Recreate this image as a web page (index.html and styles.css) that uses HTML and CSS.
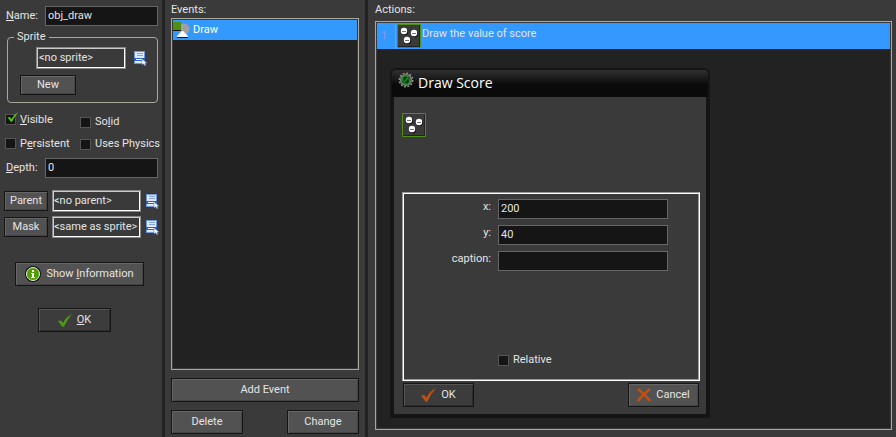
FILE: index.html
```
<!DOCTYPE html>
<html lang="en">
<head>
  <meta charset="UTF-8">
  <meta name="viewport" content="width=device-width, initial-scale=1.0">
  <title>Object Properties</title>
  <link rel="stylesheet" href="styles.css">
</head>
<body>
  <!-- shared icons -->
  <svg class="defs" aria-hidden="true">
    <symbol id="icon-menu" viewBox="0 0 13 15">
      <path fill="#6f95dc" d="M0 0h11v13H0z"/>
      <path fill="#dfe9fb" d="M1 1h9v11H1z"/>
      <path fill="#86a5df" d="M3 2h6v1H3zM3 4h6v1H3z"/>
      <path fill="#2b63c4" d="M0 7h11v3H0z"/>
      <path fill="#fff" d="M2 8h7v1H2z"/>
      <path fill="#fff" stroke="#4468b0" stroke-width=".5" d="M8 8l5 4-2 .3 1 2-1.200.5-1-2L8 14z"/>
    </symbol>
    <symbol id="icon-check" viewBox="0 0 14 13">
      <path d="M0 7l3-.5 2 2.500Q8 3 14 0 9 6 6 12.500L4.500 13z"/>
    </symbol>
    <symbol id="icon-score" viewBox="0 0 24 24">
      <path fill="#3a3a3a" stroke="#4e8f16" d="M.5.5h23v23H.5z"/>
      <path fill="none" stroke="#222" d="M22.500 1v21.500H1"/>
      <g fill="#181818"><circle cx="8" cy="8" r="3.200"/><circle cx="18" cy="10" r="3.200"/><circle cx="11" cy="17" r="3.200"/></g>
      <g fill="#fff"><circle cx="7" cy="7" r="3.200"/><circle cx="17" cy="9" r="3.200"/><circle cx="10" cy="16" r="3.200"/></g>
      <path fill="#777" d="M5 7h4v1H5zM15 9h4v1h-4zM8 16h4v1H8z"/>
    </symbol>
  </svg>

  <main class="editor">
    <form class="properties">
      <div class="name-row">
        <label for="name"><u>N</u>ame:</label>
        <input class="field" id="name" type="text" value="obj_draw">
      </div>
      <fieldset class="sprite">
        <legend>Sprite</legend>
        <div class="sprite-row">
          <output class="resource">&lt;no sprite&gt;</output>
          <button class="pick" type="button" aria-label="Choose sprite"><svg width="13" height="15"><use href="#icon-menu"/></svg></button>
        </div>
        <button class="btn small new" type="button">New</button>
      </fieldset>
      <div class="flags">
        <div class="flag-column">
          <label class="flag"><input class="check" type="checkbox" checked><span><u>V</u>isible</span><svg class="tick" width="12" height="10"><use href="#icon-check"/></svg></label>
          <label class="flag"><input class="check" type="checkbox"><span>P<u>e</u>rsistent</span></label>
        </div>
        <div class="flag-column second">
          <label class="flag"><input class="check" type="checkbox"><span>So<u>l</u>id</span></label>
          <label class="flag"><input class="check" type="checkbox"><span>Uses Physics</span></label>
        </div>
      </div>
      <div class="depth-row">
        <label for="depth"><u>D</u>epth:</label>
        <input class="field" id="depth" type="text" value="0">
      </div>
      <div class="links">
        <button class="btn small" type="button">Parent</button>
        <output class="resource">&lt;no parent&gt;</output>
        <button class="pick" type="button" aria-label="Choose parent"><svg width="13" height="15"><use href="#icon-menu"/></svg></button>
        <button class="btn small" type="button">Mask</button>
        <output class="resource">&lt;same as sprite&gt;</output>
        <button class="pick" type="button" aria-label="Choose mask"><svg width="13" height="15"><use href="#icon-menu"/></svg></button>
      </div>
      <button class="btn info" type="button">
        <svg width="16" height="16" viewBox="0 0 16 16">
          <circle cx="8" cy="8" r="8" fill="#111"/>
          <circle cx="8" cy="8" r="6.500" fill="#519b05" stroke="#e9f2e0" stroke-width="1"/>
          <path fill="#fff" d="M7 4h2v2H7zM6 7h3v4h1v1H6v-1h1V8H6z"/>
        </svg>
        <span>Show <u>I</u>nformation</span>
      </button>
      <button class="btn dark confirm" type="button">
        <svg class="green" width="14" height="13"><use href="#icon-check"/></svg>
        <span><u>O</u>K</span>
      </button>
    </form>

    <section class="events">
      <h2>Events:</h2>
      <ul class="list">
        <li class="event">
          <svg width="17" height="16" viewBox="0 0 17 16">
            <circle cx="11" cy="7" r="5.500" fill="#a0a0a0"/>
            <path fill="#111" d="M0 8h8v1H0zM4 15h11v1H4z"/>
            <path fill="#4e8f16" d="M0 0h8v8H0z"/>
            <path fill="#fff" d="M9 9h1l5 5v1H4v-1z"/>
          </svg>
          <span>Draw</span>
        </li>
      </ul>
      <button class="btn" type="button">Add Event</button>
      <div class="event-buttons">
        <button class="btn" type="button">Delete</button>
        <button class="btn" type="button">Change</button>
      </div>
    </section>

    <section class="actions">
      <h2>Actions:</h2>
      <ol class="list">
        <li class="action">
          <span class="line">1</span>
          <svg width="24" height="24"><use href="#icon-score"/></svg>
          <span class="action-text">Draw the value of score</span>
        </li>
      </ol>

      <div class="dialog" role="dialog" aria-labelledby="dialog-title">
        <header class="titlebar">
          <svg width="16" height="16" viewBox="0 0 16 16">
            <circle cx="8" cy="8" r="6.700" fill="none" stroke="#8a8a8a" stroke-width="1.600" stroke-dasharray="2 1.500"/>
            <circle cx="8" cy="8" r="5.300" fill="#0e3a12" stroke="#858585" stroke-width="1.500"/>
            <path fill="none" stroke="#1f8c2b" stroke-width="1.500" d="M5 9a3 3 0 0 1 5-4M11 7a3 3 0 0 1-5 4M5.500 10.500l5-5"/>
          </svg>
          <h1 id="dialog-title">Draw Score</h1>
        </header>
        <form class="dialog-body">
          <svg class="action-icon" width="24" height="24"><use href="#icon-score"/></svg>
          <div class="params">
            <label for="x">x:</label>
            <input class="field" id="x" type="text" value="200">
            <label for="y">y:</label>
            <input class="field" id="y" type="text" value="40">
            <label for="caption">caption:</label>
            <input class="field" id="caption" type="text">
            <label class="flag relative"><input class="check" type="checkbox"><span>Relative</span></label>
          </div>
          <div class="dialog-buttons">
            <button class="btn dark" type="button">
              <svg class="orange" width="15" height="14"><use href="#icon-check"/></svg>
              <span>OK</span>
            </button>
            <button class="btn" type="button">
              <svg width="14" height="14" viewBox="0 0 14 14"><path fill="none" stroke="#c05010" stroke-width="2.500" d="M1 1q7 5 12 12M13 1Q6 6 1 13"/></svg>
              <span>Cancel</span>
            </button>
          </div>
        </form>
      </div>
    </section>
  </main>
</body>
</html>
```
FILE: styles.css
```
* {
  box-sizing: border-box;
}
body {
  margin: 0;
  background: #3a3a3a;
  color: #e4e4e4;
  font-family: Roboto, "Liberation Sans", sans-serif;
  font-size: 11px;
  line-height: 16px;
}
button,
input {
  font: inherit;
  color: inherit;
}
svg {
  flex: none;
}
h1,
h2 {
  margin: 0;
  font-weight: normal;
}
h2 {
  font-size: 11px;
}
.defs {
  position: absolute;
  width: 0;
  height: 0;
}
.editor {
  display: grid;
  grid-template-columns: 165px 203px 1fr;
  min-height: 100vh;
}

/* controls */
.field {
  width: 100%;
  min-width: 0;
  height: 20px;
  padding: 0 2px 2px;
  border: 1px solid #666;
  background: #151515;
}
.btn {
  display: flex;
  align-items: center;
  justify-content: center;
  gap: 5px;
  height: 24px;
  padding: 0;
  border: 1px solid #151515;
  background: #525252;
  box-shadow: inset 1px 1px #666, inset -1px -1px #444;
}
.btn.small {
  height: 20px;
}
.btn.dark {
  background: #3c3c3c;
  box-shadow: inset 1px 1px #555, inset -1px -1px #2c2c2c;
}
.resource {
  height: 22px;
  padding: 2px;
  border: 1px solid #888;
  box-shadow: inset 1px 1px #ccc, inset -1px -1px #fff;
  white-space: nowrap;
}
.pick {
  display: flex;
  padding: 0;
  border: 0;
  background: none;
}
.check {
  appearance: none;
  width: 11px;
  height: 11px;
  margin: 0;
  border: 1px solid #555;
  background: #151515;
}
.flag {
  position: relative;
  display: flex;
  align-items: center;
  gap: 4px;
}
.tick {
  position: absolute;
  left: 2px;
  top: 1px;
  fill: #4fc01a;
}
.green {
  fill: #4e9a14;
}
.orange {
  fill: #c05010;
}
.list {
  margin: 0;
  padding: 0;
  list-style: none;
  border: 1px solid #aca899;
  outline: 1px solid #3a3a3a;
  outline-offset: -2px;
  background: #222;
}
.list li {
  margin: 1px;
}

/* object properties */
.properties {
  display: flex;
  flex-direction: column;
  padding: 6px 4px 0;
  border-right: 3px solid #222;
}
.name-row,
.depth-row {
  display: grid;
  grid-template-columns: 39px 1fr;
  align-items: center;
  padding-left: 2px;
}
.sprite {
  min-width: 0;
  height: 74px;
  margin: 3px 0 0 3px;
  padding: 2px 10px 0 12px;
  border: 1px solid #aca899;
  border-radius: 4px;
}
.sprite legend {
  margin-left: -6px;
  padding: 0 3px;
}
.sprite-row {
  display: flex;
  align-items: center;
  justify-content: flex-end;
  gap: 8px;
}
.sprite-row .resource {
  width: 90px;
}
.new {
  width: 56px;
  margin-top: 6px;
}
.flags {
  display: grid;
  grid-template-columns: 75px 1fr;
  margin-top: 8px;
}
.flag-column {
  display: grid;
  gap: 7px;
  padding-left: 1px;
  white-space: nowrap;
}
.second {
  padding-top: 3px;
  gap: 6px;
}
.depth-row {
  margin-top: 6px;
}
.links {
  display: grid;
  grid-template-columns: 44px 89px 14px;
  align-items: center;
  gap: 4px;
  margin-top: 12px;
}
.links .resource {
  padding: 2px 1px;
}
.links .pick {
  margin-left: 1px;
}
.info {
  width: 129px;
  margin: 24px 0 0 11px;
}
.confirm {
  width: 73px;
  margin: 22px 0 0 34px;
}

/* events */
.events {
  display: flex;
  flex-direction: column;
  padding: 2px 6px 3px;
  border-right: 3px solid #222;
}
.events .list {
  flex: 1;
  margin-bottom: 8px;
}
.event {
  display: flex;
  align-items: center;
  gap: 3px;
  height: 20px;
  color: #fff;
  background: #3399ff;
}
.event-buttons {
  display: flex;
  justify-content: space-between;
  margin-top: 8px;
}
.event-buttons .btn {
  width: 72px;
}

/* actions */
.actions {
  position: relative;
  display: flex;
  flex-direction: column;
  padding: 2px 4px 7px 7px;
}
.actions .list {
  flex: 1;
  margin-top: 3px;
}
.action {
  display: flex;
  gap: 1px;
  height: 26px;
  padding-top: 1px;
  background: #3399ff;
}
.action-text {
  padding-top: 2px;
}
.line {
  width: 19px;
  padding: 4px 0 0 4px;
  border-right: 1px solid #8a9ad8;
  color: #8a9ad8;
}

/* action dialog, floats over the list */
.dialog {
  position: absolute;
  left: 22px;
  top: 68px;
  width: 320px;
  border: 2px solid #151515;
  border-radius: 6px 6px 0 0;
  background: #151515;
}
.titlebar {
  display: flex;
  gap: 4px;
  height: 27px;
  padding: 2px 6px;
  border-radius: 4px 4px 0 0;
  background: linear-gradient(#303030, #0a0a0a 55%);
}
.titlebar h1 {
  color: #fff;
  font-family: "Open Sans", "Noto Sans", sans-serif;
  font-size: 14px;
  line-height: 22px;
}
.dialog-body {
  margin: 0 2px 2px;
  padding: 16px 6px 7px 8px;
  background: #3a3a3a;
}
.action-icon {
  display: block;
}
.params {
  display: grid;
  grid-template-columns: 87px 170px;
  grid-template-rows: 20px 20px 20px;
  gap: 6px 7px;
  height: 189px;
  margin-top: 55px;
  padding-top: 6px;
  border: 1px solid #999;
  border-bottom-color: #fff;
  border-right-color: #fff;
  box-shadow: inset 1px 1px #fff, inset -1px -1px #999;
  padding-left: 1px;
}
.params label {
  text-align: right;
}
.params .relative {
  grid-column: 2;
  align-self: end;
  margin-bottom: 12px;
}
.dialog-buttons {
  display: flex;
  justify-content: space-between;
  margin: 2px 1px 0;
}
.dialog-buttons .btn {
  width: 71px;
}
```
